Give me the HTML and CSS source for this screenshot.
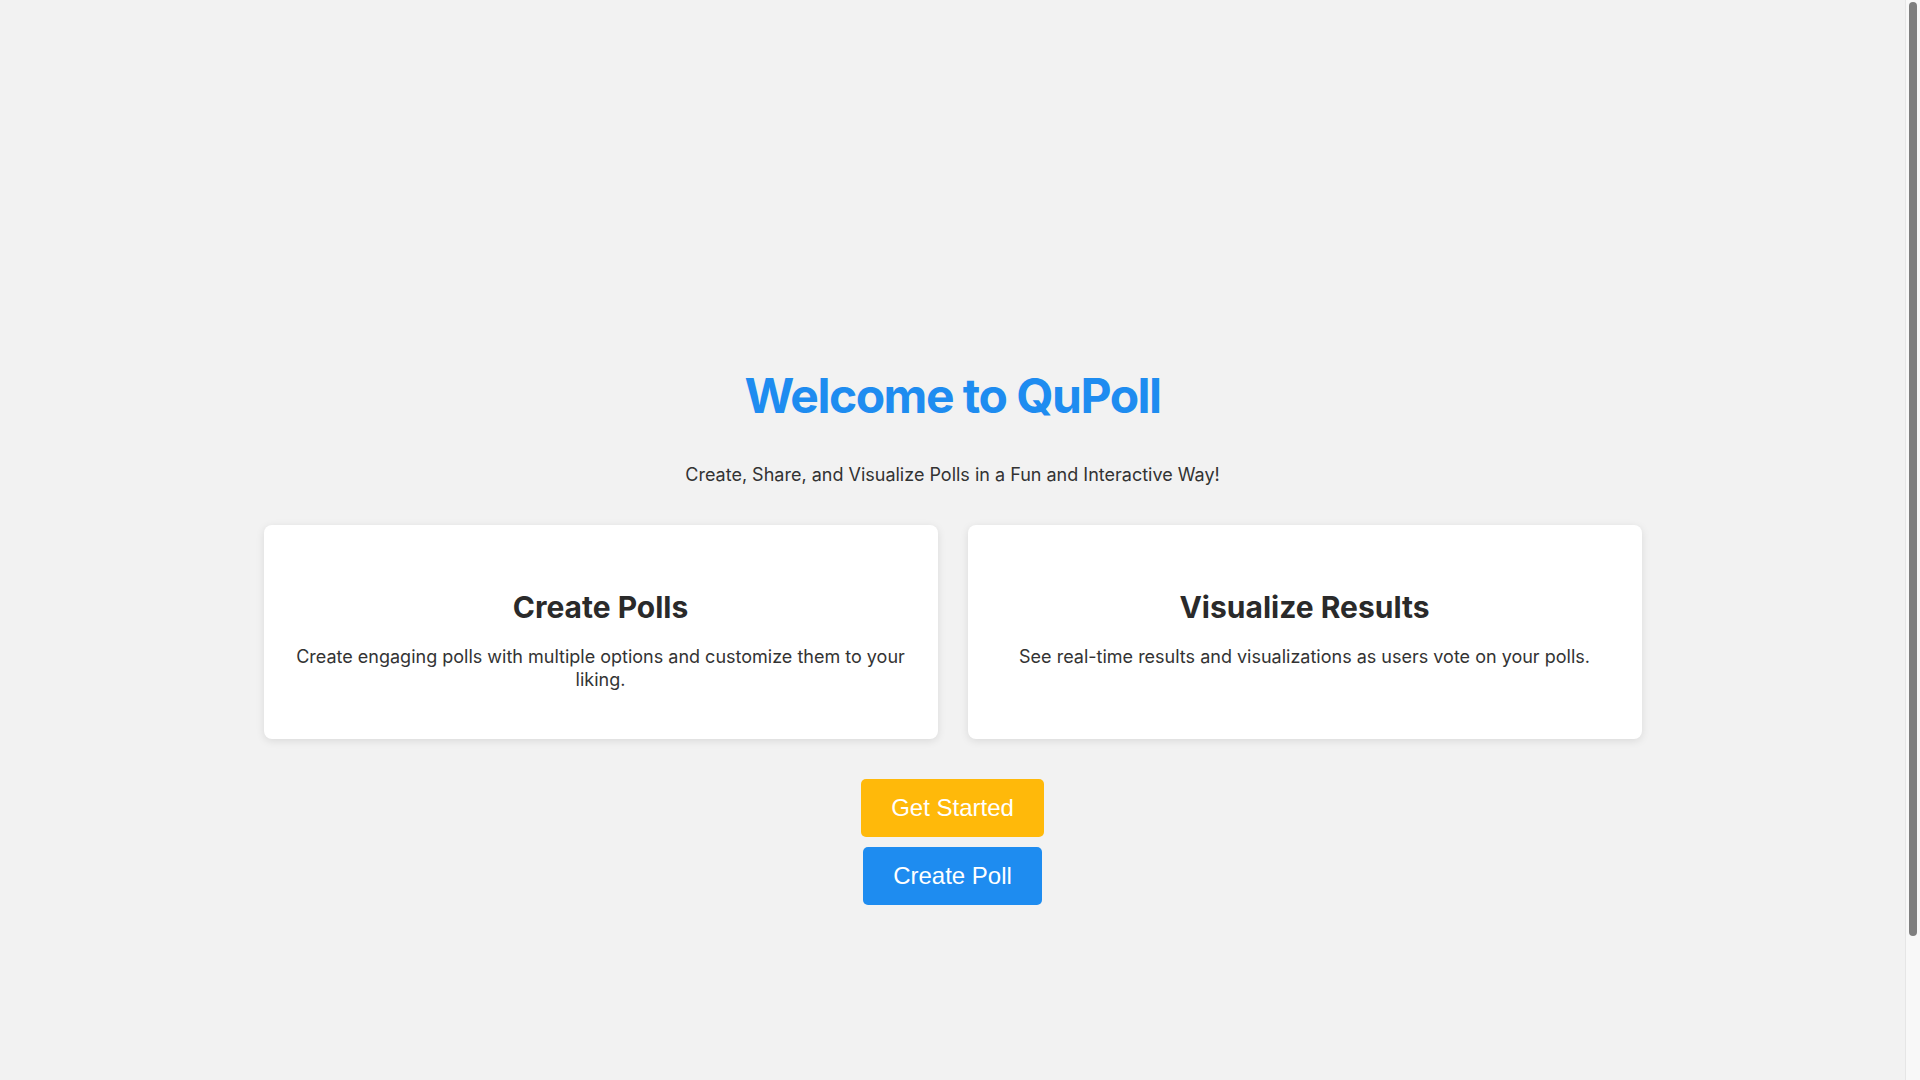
FILE: index.html
```html
<!DOCTYPE html>
<html lang="en">
<head>
<meta charset="utf-8">
<title>QuPoll</title>
<link rel="stylesheet" href="styles.css">
</head>
<body>
<main class="page">
  <h1 class="title">Welcome to QuPoll</h1>
  <p class="subtitle">Create, Share, and Visualize Polls in a Fun and Interactive Way!</p>
  <section class="features">
    <div class="card">
      <h2 class="card-title">Create Polls</h2>
      <p class="card-text">Create engaging polls with multiple options and customize them to your liking.</p>
    </div>
    <div class="card">
      <h2 class="card-title">Visualize Results</h2>
      <p class="card-text">See real-time results and visualizations as users vote on your polls.</p>
    </div>
  </section>
  <div class="actions">
    <button class="btn btn-yellow">Get Started</button>
    <button class="btn btn-blue">Create Poll</button>
  </div>
</main>
<div class="scrollbar" aria-hidden="true"><div class="scrollbar-thumb"></div></div>
</body>
</html>
```

FILE: styles.css
```css
html, body {
  margin: 0;
  padding: 0;
}
body {
  background: #f2f2f2;
  font-family: Inter, "Noto Sans", sans-serif;
  color: #333;
}
.page {
  padding: 366px 15px 340px 0;
  text-align: center;
}
.title {
  margin: 0 0 39px;
  font-size: 48px;
  font-weight: 700;
  letter-spacing: -1.5px;
  color: #1e8cf0;
}
.subtitle {
  margin: 0 0 40px;
  font-size: 18px;
  color: #333;
}
.features {
  width: 1378px;
  max-width: calc(100% - 40px);
  margin: 0 auto;
  display: grid;
  grid-template-columns: 1fr 1fr;
  gap: 30px;
}
.card {
  background: #fff;
  border-radius: 8px;
  box-shadow: 0 2px 8px rgba(0, 0, 0, 0.1);
  padding: 40px 20px 47px;
}
.card-title {
  margin: 24px 0 20px;
  font-size: 30px;
  font-weight: 700;
  color: #2a2a2a;
}
.card-text {
  margin: 0;
  font-size: 18px;
  line-height: 1.3;
  color: #333;
}
.actions {
  margin-top: 40px;
  display: flex;
  flex-direction: column;
  align-items: center;
  gap: 10px;
}
.btn {
  font-family: "Liberation Sans", Arial, sans-serif;
  font-size: 24px;
  color: #fff;
  border: none;
  border-radius: 5px;
  padding: 15px 30px;
  cursor: pointer;
}
.btn-yellow {
  background: #ffb90a;
}
.btn-blue {
  background: #1e8cf0;
}
.scrollbar {
  position: fixed;
  top: 0;
  right: 0;
  width: 15px;
  height: 100vh;
  box-sizing: border-box;
  background: #f8f8f8;
  border-left: 1px solid #e6e6e6;
  padding: 2px 3px 0 3px;
}
.scrollbar-thumb {
  height: 934px;
  background: #7f7f7f;
  border-radius: 4px;
}
```
